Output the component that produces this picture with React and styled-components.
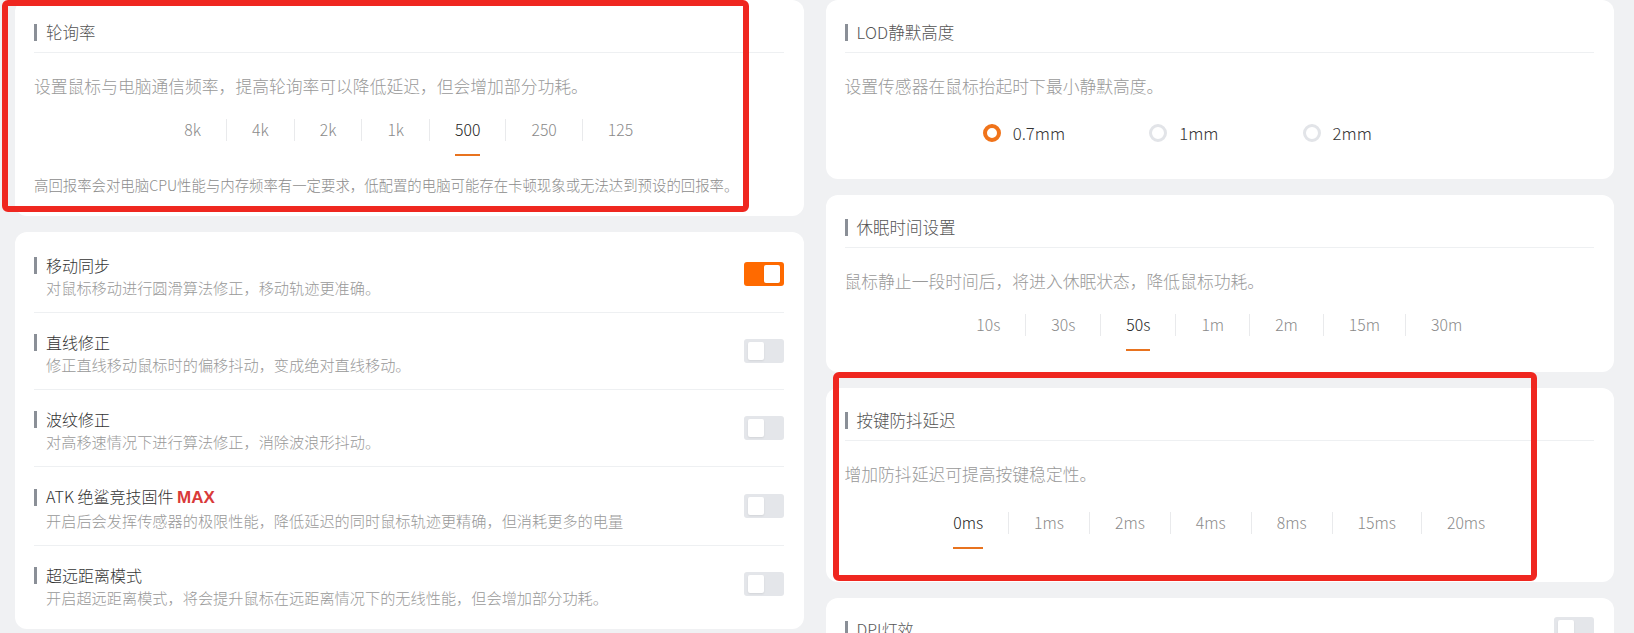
import React from 'react';
import styled, { createGlobalStyle } from 'styled-components';

const GlobalStyle = createGlobalStyle`
  html, body {
    margin: 0;
    padding: 0;
    height: 633px;
    overflow: hidden;
    background: #f0f1f3;
  }

  body {
    font-family: 'Noto Sans CJK SC', 'Noto Sans', sans-serif;
    font-weight: 300;
    color: #333;
  }
`;

const Page = styled.div`
  position: relative;
  display: grid;
  grid-template-columns: 1fr 1fr;
  column-gap: 22px;
  padding: 0 20px 0 15px;
  height: 633px;
  overflow: hidden;
  box-sizing: border-box;
`;

const Column = styled.div`
  display: flex;
  flex-direction: column;
  gap: 16px;
`;

const Card = styled.section`
  flex-shrink: 0;
  background: #fff;
  border-radius: 12px;
  padding: ${({ $top = 0 }) => $top}px 20px ${({ $bottom = 0 }) => $bottom}px 19px;
`;

const CardHeader = styled.div`
  padding: 22px 0 10px;
  border-bottom: 1px solid #eef0f2;
`;

const Title = styled.h3`
  position: relative;
  margin: 0;
  padding-left: 12px;
  font-size: 16.5px;
  font-weight: 300;
  line-height: 20px;
  color: ${({ $dark }) => ($dark ? '#333' : '#555')};

  &:before {
    content: '';
    position: absolute;
    left: 0;
    top: 50%;
    width: 3px;
    height: 17px;
    margin-top: -8px;
    background: #8a8f97;
  }
`;

const Desc = styled.p`
  margin: 22px 0 0;
  font-size: 16.8px;
  line-height: 22px;
  color: #999;
`;

const TabBar = styled.div`
  display: flex;
  justify-content: center;
  margin-top: ${({ $gap = 22 }) => $gap}px;
`;

const Tab = styled.div`
  padding: 0 25px;
  font-size: 15.8px;
  line-height: 22px;
  color: ${({ $active }) => ($active ? '#222' : '#8a8a8a')};

  & + & {
    border-left: 1px solid #e9eaec;
  }
`;

const TabLabel = styled.span`
  position: relative;
  display: inline-block;

  &:after {
    content: '';
    display: ${({ $active }) => ($active ? 'block' : 'none')};
    position: absolute;
    left: 0;
    right: 0;
    top: 35px;
    height: 2px;
    background: #e8731f;
  }
`;

const Note = styled.p`
  margin: 34px 0 0;
  font-size: 14.4px;
  line-height: 20px;
  color: #8c8c8c;
`;

const RadioGroup = styled.div`
  display: flex;
  justify-content: center;
  margin-top: 25px;
`;

const Radio = styled.label`
  display: flex;
  align-items: center;
  margin-right: 84px;
  font-size: 16.8px;
  line-height: 22px;
  color: #333;
`;

const Dot = styled.span`
  box-sizing: border-box;
  width: 18px;
  height: 18px;
  margin-right: 12px;
  border-radius: 50%;
  background: #fff;
  border: ${({ $checked }) => ($checked ? '4px solid #f0731a' : '3px solid #e2e4e8')};
`;

const ToggleRow = styled.div`
  display: flex;
  align-items: center;
  justify-content: space-between;
  padding: ${({ $pad = '18px 0 14px' }) => $pad};

  & + & {
    border-top: 1px solid #eef0f2;
  }
`;

const RowText = styled.div`
  display: flex;
  flex-direction: column;
`;

const RowTitle = styled(Title)`
  font-size: 16px;
  line-height: 22px;
`;

const RowDesc = styled.span`
  padding-left: 12px;
  font-size: 15.2px;
  line-height: 22px;
  color: #999;
`;

const Max = styled.b`
  font-family: 'Liberation Sans', 'Noto Sans', sans-serif;
  font-size: 17px;
  font-weight: 700;
  color: #d93a3a;
`;

const Switch = styled.span`
  position: relative;
  flex-shrink: 0;
  width: 40px;
  height: 24px;
  margin-bottom: ${({ $lift = 0 }) => $lift}px;
  border-radius: 3px;
  background: ${({ $on }) => ($on ? '#ff6a00' : '#e4e6ea')};

  &:after {
    content: '';
    position: absolute;
    top: 3px;
    ${({ $on }) => ($on ? 'right: 4px;' : 'left: 4px;')}
    width: 16px;
    height: 18px;
    border-radius: 2px;
    background: #fff;
    box-shadow: 0 1px 2px rgba(0, 0, 0, 0.08);
  }
`;

const Highlight = styled.div`
  position: absolute;
  left: ${({ $x }) => $x}px;
  top: ${({ $y }) => $y}px;
  width: ${({ $w }) => $w}px;
  height: ${({ $h }) => $h}px;
  box-sizing: border-box;
  border: 6px solid #ef2720;
  border-radius: 6px;
  pointer-events: none;
`;

const Tabs = ({ items, active, gap }) => (
  <TabBar $gap={gap}>
    {items.map((item) => (
      <Tab key={item} $active={item === active}>
        <TabLabel $active={item === active}>{item}</TabLabel>
      </Tab>
    ))}
  </TabBar>
);

const toggles = [
  { title: '移动同步', desc: '对鼠标移动进行圆滑算法修正，移动轨迹更准确。', on: true },
  { title: '直线修正', desc: '修正直线移动鼠标时的偏移抖动，变成绝对直线移动。' },
  { title: '波纹修正', desc: '对高移速情况下进行算法修正，消除波浪形抖动。' },
  { title: 'ATK 绝鲨竞技固件 ', max: true, desc: '开启后会发挥传感器的极限性能，降低延迟的同时鼠标轨迹更精确，但消耗更多的电量' },
  { title: '超远距离模式', desc: '开启超远距离模式，将会提升鼠标在远距离情况下的无线性能，但会增加部分功耗。' },
];

const polling = ['8k', '4k', '2k', '1k', '500', '250', '125'];
const sleep = ['10s', '30s', '50s', '1m', '2m', '15m', '30m'];
const debounce = ['0ms', '1ms', '2ms', '4ms', '8ms', '15ms', '20ms'];
const lod = ['0.7mm', '1mm', '2mm'];

const App = () => {
  return (
    <>
      <GlobalStyle />
      <Page>
        <Column>
          <Card $bottom={21}>
            <CardHeader>
              <Title>轮询率</Title>
            </CardHeader>
            <Desc>设置鼠标与电脑通信频率，提高轮询率可以降低延迟，但会增加部分功耗。</Desc>
            <Tabs items={polling} active="500" />
            <Note>高回报率会对电脑CPU性能与内存频率有一定要求，低配置的电脑可能存在卡顿现象或无法达到预设的回报率。</Note>
          </Card>

          <Card $top={4} $bottom={7}>
            {toggles.map((t) => (
              <ToggleRow key={t.title}>
                <RowText>
                  <RowTitle $dark>
                    {t.title}
                    {t.max && <Max>MAX</Max>}
                  </RowTitle>
                  <RowDesc>{t.desc}</RowDesc>
                </RowText>
                <Switch $on={t.on} $lift={4} />
              </ToggleRow>
            ))}
          </Card>
        </Column>

        <Column>
          <Card $bottom={35}>
            <CardHeader>
              <Title>LOD静默高度</Title>
            </CardHeader>
            <Desc>设置传感器在鼠标抬起时下最小静默高度。</Desc>
            <RadioGroup>
              {lod.map((v, i) => (
                <Radio key={v}>
                  <Dot $checked={i === 0} />
                  {v}
                </Radio>
              ))}
            </RadioGroup>
          </Card>

          <Card $bottom={36}>
            <CardHeader>
              <Title>休眠时间设置</Title>
            </CardHeader>
            <Desc>鼠标静止一段时间后，将进入休眠状态，降低鼠标功耗。</Desc>
            <Tabs items={sleep} active="50s" />
          </Card>

          <Card $bottom={48}>
            <CardHeader>
              <Title>按键防抖延迟</Title>
            </CardHeader>
            <Desc>增加防抖延迟可提高按键稳定性。</Desc>
            <Tabs items={debounce} active="0ms" gap={27} />
          </Card>

          <Card $top={19} $bottom={20}>
            <ToggleRow $pad="0">
              <RowTitle>DPI灯效</RowTitle>
              <Switch />
            </ToggleRow>
          </Card>
        </Column>

        <Highlight $x={2} $y={0} $w={747} $h={212} />
        <Highlight $x={833} $y={372} $w={704} $h={209} />
      </Page>
    </>
  );
};

export default App;
